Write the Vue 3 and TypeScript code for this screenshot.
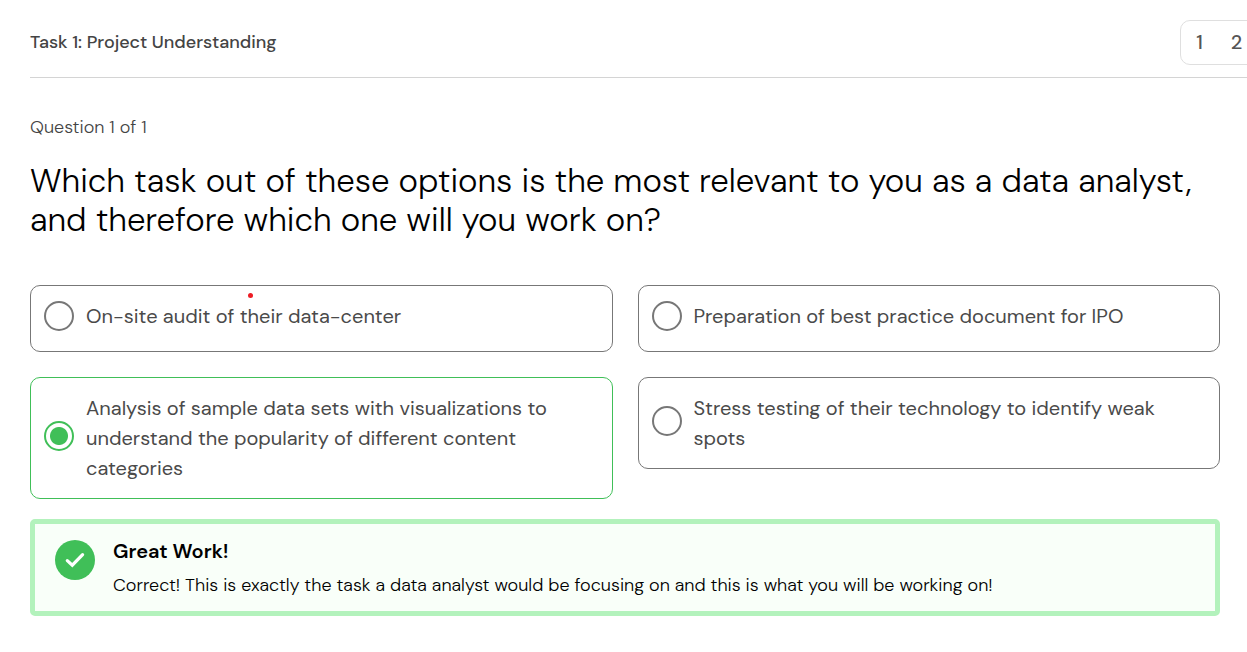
<script setup lang="ts">
import { ref } from 'vue'

interface Option {
  id: string
  label: string
  marked?: boolean
}

const options: Option[] = [
  { id: 'audit', label: 'On-site audit of their data-center', marked: true },
  { id: 'ipo', label: 'Preparation of best practice document for IPO' },
  {
    id: 'analysis',
    label: 'Analysis of sample data sets with visualizations to understand the popularity of different content categories',
  },
  { id: 'stress', label: 'Stress testing of their technology to identify weak spots' },
]
const pages: number[] = [1, 2]
const selected = ref<string>('analysis')
</script>

<template>
  <div class="page">
    <header class="header">
      <h2 class="task">Task 1: Project Understanding</h2>
      <nav class="pager" aria-label="Tasks">
        <button v-for="n in pages" :key="n" type="button" class="pager-button">{{ n }}</button>
      </nav>
    </header>

    <main class="content">
      <p class="progress">Question 1 of 1</p>
      <h1 id="question" class="question">
        Which task out of these options is the most relevant to you as a data analyst, and therefore which one will you work on?
      </h1>

      <div class="options" role="radiogroup" aria-labelledby="question">
        <label
          v-for="option in options"
          :key="option.id"
          class="option"
          :class="{ chosen: selected === option.id }"
          :for="option.id"
        >
          <input :id="option.id" v-model="selected" class="radio" type="radio" name="task" :value="option.id" />
          <span class="option-text">{{ option.label }}</span>
          <span v-if="option.marked" class="dot"></span>
        </label>
      </div>

      <section class="feedback" role="status">
        <svg class="check" viewBox="0 0 40 40" aria-hidden="true">
          <circle cx="20" cy="20" r="20" fill="#40bf58" />
          <path d="M12.3 20.6 17.3 25.2 27.6 14.6" fill="none" stroke="#fff" stroke-width="3.2" stroke-linecap="round" stroke-linejoin="miter" />
        </svg>
        <div>
          <h3 class="feedback-title">Great Work!</h3>
          <p class="feedback-text">
            Correct! This is exactly the task a data analyst would be focusing on and this is what you will be working on!
          </p>
        </div>
      </section>
    </main>
  </div>
</template>

<style>
body {
  margin: 0;
  background: #fff;
}
</style>

<style scoped>
.page {
  overflow: hidden;
  font-family: "DM Sans", Inter, "Open Sans", sans-serif;
  color: #000;
}

.header {
  display: flex;
  align-items: flex-start;
  justify-content: space-between;
  margin: 0 -11px 0 30px;
  padding: 20px 0 12px;
  border-bottom: 1px solid #d4d4d4;
}

.task {
  margin: 0;
  font-size: 18px;
  line-height: 44px;
  font-weight: 500;
  color: #444;
}

.pager {
  display: flex;
  flex: none;
  box-sizing: border-box;
  height: 45px;
  padding: 0 2px 2px 0;
  border: 1px solid #dfdfdf;
  border-radius: 10px;
}

.pager-button {
  width: 37px;
  padding: 0;
  border: 0;
  background: none;
  font: inherit;
  font-size: 20px;
  line-height: 24px;
  font-weight: 500;
  color: #555;
}

.content {
  padding: 37px 27px 36px 30px;
}

.progress {
  margin: 0;
  font-size: 18px;
  line-height: 24px;
  font-weight: 300;
  color: #444;
}

.question {
  margin: 22px 0 46px;
  font-size: 33px;
  line-height: 39px;
  font-weight: 300;
}

.options {
  display: grid;
  grid-template-columns: 1fr 1fr;
  align-items: start;
  gap: 25px;
}

.option {
  position: relative;
  display: flex;
  align-items: center;
  gap: 12px;
  padding: 15px 13px;
  border: 1px solid #777;
  border-radius: 10px;
}

.option.chosen {
  border-color: #40bf58;
}

.radio {
  appearance: none;
  flex: none;
  box-sizing: border-box;
  width: 30px;
  height: 30px;
  margin: 0 0 5px;
  border: 2px solid #777;
  border-radius: 50%;
}

.radio:checked {
  border-color: #40bf58;
  background: radial-gradient(circle, #40bf58 0 8.5px, transparent 9.5px);
}

.option-text {
  align-self: flex-start;
  font-size: 20px;
  line-height: 30px;
  font-weight: 400;
  color: #4a4a4a;
}

.dot {
  position: absolute;
  top: 7px;
  left: 217px;
  width: 5px;
  height: 5px;
  border-radius: 50%;
  background: #ed1c24;
}

.feedback {
  display: flex;
  gap: 18px;
  margin-top: 20px;
  padding: 16px 20px 13px;
  border: 5px solid #b3f2bc;
  border-radius: 5px;
  background: #f9fff9;
}

.check {
  flex: none;
  width: 40px;
  height: 40px;
}

.feedback-title {
  margin: 0 0 12px;
  font-size: 20px;
  line-height: 22px;
  font-weight: 600;
}

.feedback-text {
  margin: 0 0 2px;
  font-size: 18px;
  line-height: 22px;
  font-weight: 300;
}
</style>
